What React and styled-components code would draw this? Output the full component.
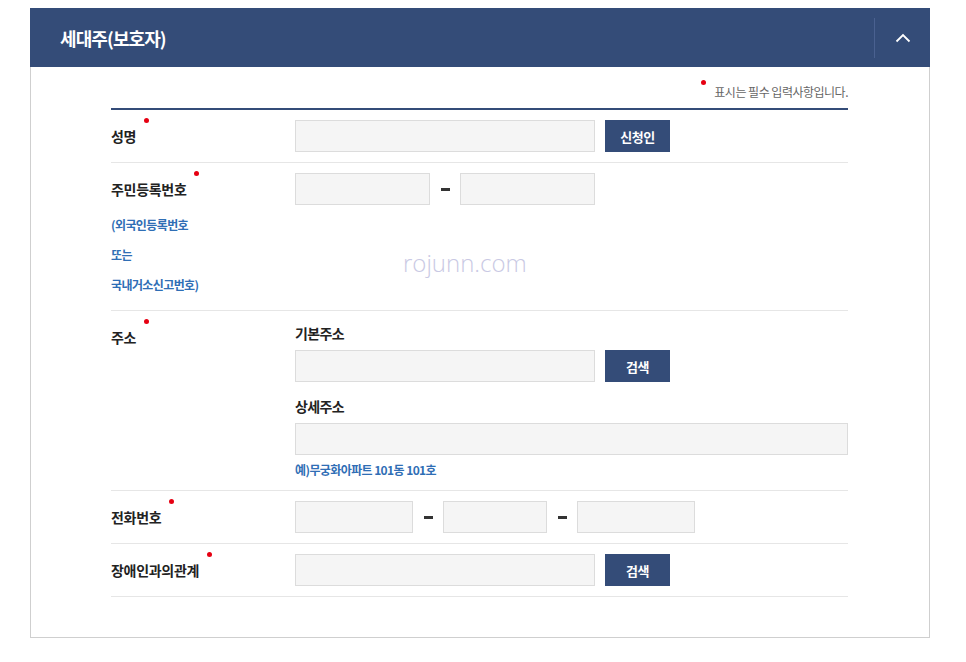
import React from "react";
import styled, { createGlobalStyle } from "styled-components";

const GlobalStyle = createGlobalStyle`
  html, body { margin: 0; padding: 0; background: #fff; }
  body { font-family: "Noto Sans CJK KR", "Noto Sans", sans-serif; color: #222; }
  * { box-sizing: border-box; }
`;

const NAVY = "#344c78";
const BLUE = "#2f6eb5";

const Panel = styled.section`
  width: 900px;
  margin: 8px 0 0 30px;
  position: relative;
`;

const Header = styled.header`
  height: 59px;
  background: ${NAVY};
  display: flex;
  align-items: center;
  justify-content: space-between;
  padding-left: 30px;
`;

const Title = styled.h2`
  margin: 0;
  color: #fff;
  font-size: 18px;
  font-weight: 700;
  letter-spacing: -0.9px;
`;

const ToggleButton = styled.button`
  width: 56px;
  height: 40px;
  border: 0;
  border-left: 1px solid #4a6190;
  background: transparent;
  display: flex;
  align-items: center;
  justify-content: center;
  padding: 0;
  cursor: pointer;
`;

const Body = styled.div`
  border: 1px solid #cfcfcf;
  border-top: 0;
  padding: 8px 81px 40px 80px;
`;

const Note = styled.p`
  margin: 0;
  height: 33px;
  display: flex;
  justify-content: flex-end;
  align-items: center;
  font-size: 12px;
  letter-spacing: -0.5px;
  color: #666;
`;

const NoteDot = styled.span`
  width: 5px;
  height: 5px;
  border-radius: 50%;
  background: #e60012;
  margin-right: 8px;
  align-self: flex-start;
  margin-top: 5px;
`;

const Table = styled.div`
  border-top: 2px solid ${NAVY};
`;

const Row = styled.div`
  display: grid;
  grid-template-columns: 184px 1fr;
  border-bottom: 1px solid #e6e6e6;
  padding: 10px 0;
`;

const LabelCell = styled.div`
  display: flex;
  flex-direction: column;
`;

const Label = styled.div`
  height: 32px;
  display: flex;
  align-items: center;
`;

const LabelText = styled.span`
  position: relative;
  font-size: 14px;
  font-weight: 700;
  letter-spacing: -0.3px;
  color: #222;
  &::after {
    content: "";
    position: absolute;
    right: -13px;
    top: -8px;
    width: 5px;
    height: 5px;
    border-radius: 50%;
    background: #e60012;
  }
`;

const LabelHint = styled.div`
  margin-top: 5px;
  font-size: 12px;
  font-weight: 700;
  letter-spacing: -0.6px;
  line-height: 30px;
  color: ${BLUE};
`;

const Content = styled.div`
  display: flex;
  flex-direction: column;
`;

const Line = styled.div`
  display: flex;
  align-items: center;
`;

const Input = styled.input`
  width: ${(p) => p.$w}px;
  height: 32px;
  background: #f5f5f5;
  border: 1px solid #dcdcdc;
  padding: 0 8px;
  font: inherit;
  outline: none;
`;

const Button = styled.button`
  width: 65px;
  height: 32px;
  margin-left: 10px;
  background: ${NAVY};
  color: #fff;
  border: 0;
  font-family: inherit;
  font-size: 13px;
  font-weight: 700;
  letter-spacing: -0.5px;
  cursor: pointer;
`;

const Dash = styled.span`
  width: ${(p) => p.$w}px;
  display: flex;
  justify-content: center;
  &::before {
    content: "";
    width: 9px;
    height: 3px;
    background: #333;
  }
`;

const SubLabel = styled.div`
  font-size: 14px;
  font-weight: 700;
  letter-spacing: -0.6px;
  line-height: 24px;
  margin: ${(p) => (p.$first ? "0" : "12px")} 0 5px;
  color: #222;
`;

const Example = styled.div`
  margin-top: 4px;
  font-size: 12px;
  font-weight: 700;
  letter-spacing: -0.6px;
  line-height: 21px;
  color: ${BLUE};
`;

const Watermark = styled.div`
  position: absolute;
  left: 373px;
  top: 238px;
  font-family: "Open Sans", sans-serif;
  font-weight: 300;
  font-size: 24px;
  color: #c9c9e4;
  pointer-events: none;
`;

function Required({ children }) {
  return (
    <Label>
      <LabelText>{children}</LabelText>
    </Label>
  );
}

export default function App() {
  return (
    <>
      <GlobalStyle />
      <Panel>
        <Header>
          <Title>세대주(보호자)</Title>
          <ToggleButton aria-label="접기">
            <svg width="16" height="10" viewBox="0 0 16 10" fill="none">
              <path d="M1.5 8.5 L8 2 L14.5 8.5" stroke="#fff" strokeWidth="1.8" />
            </svg>
          </ToggleButton>
        </Header>
        <Body>
          <Note>
            <NoteDot />
            표시는 필수 입력사항입니다.
          </Note>
          <Table>
            <Row>
              <LabelCell>
                <Required>성명</Required>
              </LabelCell>
              <Content>
                <Line>
                  <Input $w={300} />
                  <Button>신청인</Button>
                </Line>
              </Content>
            </Row>
            <Row>
              <LabelCell>
                <Required>주민등록번호</Required>
                <LabelHint>
                  (외국인등록번호
                  <br />
                  또는
                  <br />
                  국내거소신고번호)
                </LabelHint>
              </LabelCell>
              <Content>
                <Line>
                  <Input $w={135} />
                  <Dash $w={30} />
                  <Input $w={135} />
                </Line>
              </Content>
            </Row>
            <Row>
              <LabelCell>
                <Required>주소</Required>
              </LabelCell>
              <Content>
                <SubLabel $first>기본주소</SubLabel>
                <Line>
                  <Input $w={300} />
                  <Button>검색</Button>
                </Line>
                <SubLabel>상세주소</SubLabel>
                <Line>
                  <Input $w={553} />
                </Line>
                <Example>예)무궁화아파트 101동 101호</Example>
              </Content>
            </Row>
            <Row>
              <LabelCell>
                <Required>전화번호</Required>
              </LabelCell>
              <Content>
                <Line>
                  <Input $w={118} />
                  <Dash $w={30} />
                  <Input $w={104} />
                  <Dash $w={30} />
                  <Input $w={118} />
                </Line>
              </Content>
            </Row>
            <Row>
              <LabelCell>
                <Required>장애인과의관계</Required>
              </LabelCell>
              <Content>
                <Line>
                  <Input $w={300} />
                  <Button>검색</Button>
                </Line>
              </Content>
            </Row>
          </Table>
        </Body>
        <Watermark>rojunn.com</Watermark>
      </Panel>
    </>
  );
}
